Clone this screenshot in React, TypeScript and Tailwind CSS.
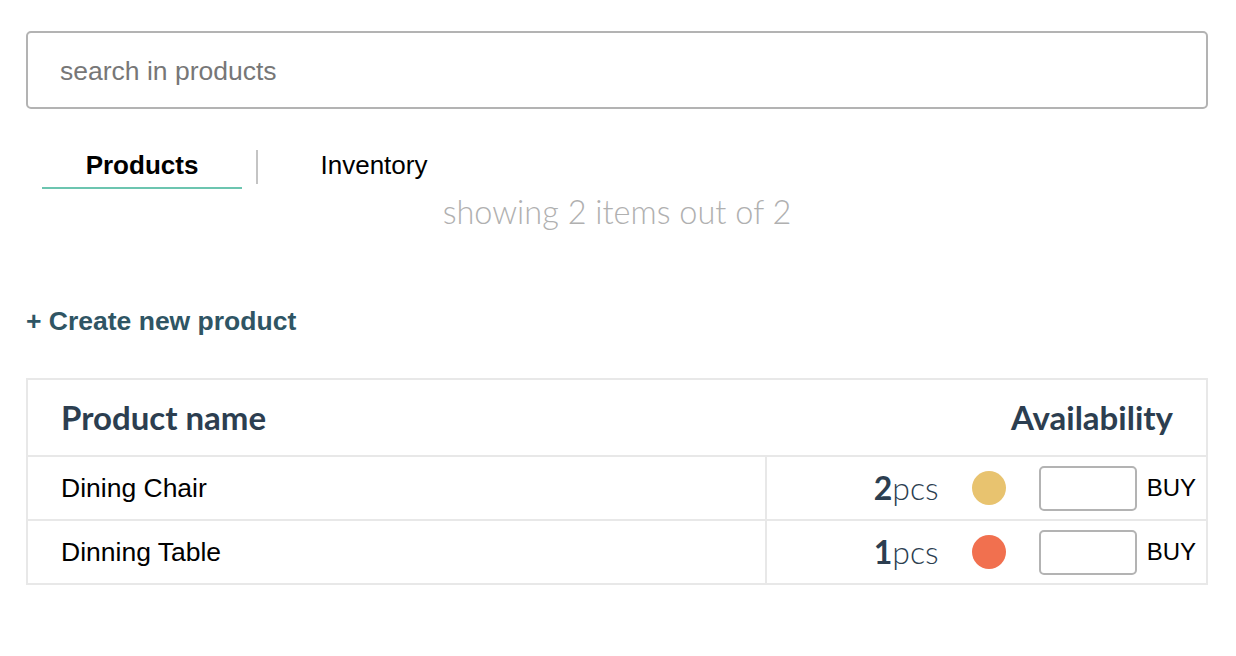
import { useState } from 'react';

type Product = {
	id: number;
	name: string;
	qty: number;
	color: string;
};

const products: Product[] = [
	{ id: 1, name: 'Dining Chair', qty: 2, color: 'bg-[#e8c36f]' },
	{ id: 2, name: 'Dinning Table', qty: 1, color: 'bg-[#f1704f]' },
];

export default function App() {
	const [search, setSearch] = useState('');
	const [tab, setTab] = useState('products');

	return (
		<div className="w-full min-h-screen bg-white pl-[26px] pr-[28px] pt-[31px] font-['Liberation_Sans',Arial,sans-serif]">
			<input
				value={search}
				onChange={(e) => setSearch(e.target.value)}
				placeholder="search in products"
				className="block w-full h-[78px] border-2 border-[#b3b3b3] rounded-[5px] px-[32px] pt-[2px] text-[26.5px] text-black placeholder:text-[#777] outline-none"
			/>

			<div className="flex items-center mt-[40px] pl-[16px]">
				<button
					onClick={() => setTab('products')}
					className={`flex items-start justify-center w-[200px] h-[40px] pt-[1px] text-[26px] leading-[30px] text-black border-b-2 ${tab === 'products' ? 'font-bold border-[#6cc5b0]' : 'border-transparent'}`}
				>
					Products
				</button>
				<div className="w-[2px] h-[34px] bg-[#c4c4c4] mx-[14px] -mt-[4px]" />
				<button
					onClick={() => setTab('inventory')}
					className={`flex items-start justify-center w-[204px] h-[40px] pt-[1px] text-[26px] leading-[30px] text-black border-b-2 ${tab === 'inventory' ? 'font-bold border-[#6cc5b0]' : 'border-transparent'}`}
				>
					Inventory
				</button>
			</div>

			<p className="text-center text-[32.5px] leading-[36px] mt-[5px] text-[#b0b0b0] font-['Lato',sans-serif] font-light">
				showing 2 items out of 2
			</p>

			<div className="mt-[76px] text-[26.5px] leading-[30px] font-bold text-[#2f5564]">+ Create new product</div>

			<div className="mt-[42px] border-2 border-[#e8e8e8]">
				<div className="flex items-center justify-between h-[77px] px-[33px] border-b-2 border-[#e8e8e8] font-['Lato',sans-serif] text-[33px] font-bold text-[#2c3e50]">
					<span>Product name</span>
					<span>Availability</span>
				</div>
				{products.map((p, i) => (
					<div key={p.id} className={`flex ${i > 0 ? 'h-[64px] border-t-2 border-[#e8e8e8]' : 'h-[62px]'}`}>
						<div className="w-[739px] flex items-center pl-[33px] pt-[2px] border-r-2 border-[#e8e8e8] text-[26.5px] text-black">
							{p.name}
						</div>
						<div className="flex-1 flex items-center justify-end pr-[10px]">
							<span className="text-[32px] text-[#2c3e50] font-['Lato',sans-serif] font-light">
								<span className="font-bold">{p.qty}</span>pcs
							</span>
							<span className={`w-[34px] h-[34px] rounded-full ml-[33px] ${p.color}`} />
							<input className="w-[98px] h-[45px] ml-[33px] border-2 border-[#b3b3b3] rounded-[5px] outline-none px-2" />
							<span className="ml-[10px] text-[24px] text-black">BUY</span>
						</div>
					</div>
				))}
			</div>
		</div>
	);
}
